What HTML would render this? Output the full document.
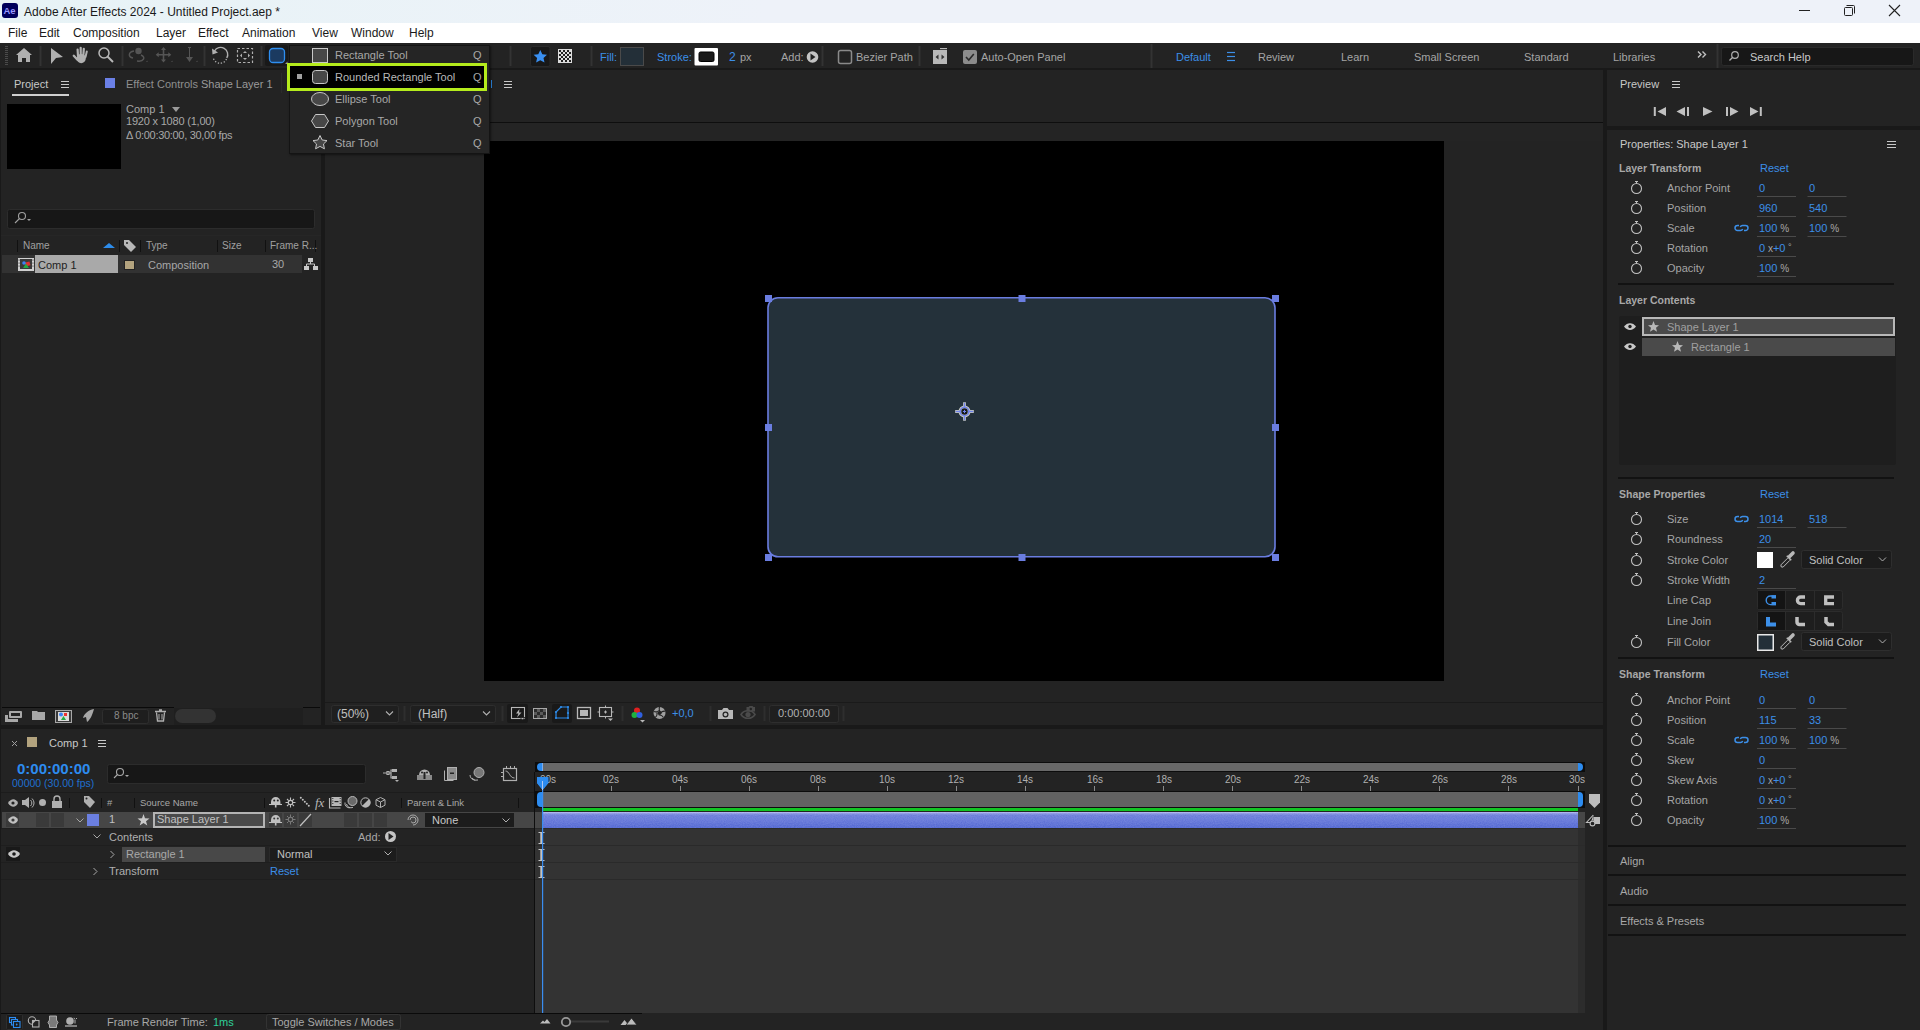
<!DOCTYPE html>
<html><head><meta charset="utf-8">
<style>
*{margin:0;padding:0;box-sizing:border-box}
html,body{width:1920px;height:1030px;overflow:hidden;background:#191919;font-family:"Liberation Sans",sans-serif;}
.a{position:absolute}
.t{position:absolute;white-space:nowrap;font-size:11px;line-height:11px;color:#a5a5a5}
.bl{color:#3c8fe8}
.pn{position:absolute;background:#232323}
svg{position:absolute;overflow:visible}
</style></head><body>
<!-- title bar -->
<div class="a" style="left:0;top:0;width:1920px;height:23px;background:linear-gradient(90deg,#e7f3f6,#eef2f9 40%,#eef2f9)"></div>
<div class="a" style="left:2px;top:3px;width:16px;height:15px;background:#00005b;border-radius:3px"></div>
<div class="t" style="left:3.5px;top:6px;font-size:9.5px;line-height:9.5px;color:#9999ff;font-weight:bold">Ae</div>
<div class="t" style="left:24px;top:6px;font-size:12px;line-height:12px;color:#1a1a1a">Adobe After Effects 2024 - Untitled Project.aep *</div>
<!-- menu bar -->
<div class="a" style="left:0;top:23px;width:1920px;height:20px;background:#fff"></div>
<div class="t" style="top:27px;font-size:12px;line-height:12px;color:#1a1a1a;left:8px">File</div>
<div class="t" style="top:27px;font-size:12px;line-height:12px;color:#1a1a1a;left:39px">Edit</div>
<div class="t" style="top:27px;font-size:12px;line-height:12px;color:#1a1a1a;left:73px">Composition</div>
<div class="t" style="top:27px;font-size:12px;line-height:12px;color:#1a1a1a;left:156px">Layer</div>
<div class="t" style="top:27px;font-size:12px;line-height:12px;color:#1a1a1a;left:198px">Effect</div>
<div class="t" style="top:27px;font-size:12px;line-height:12px;color:#1a1a1a;left:242px">Animation</div>
<div class="t" style="top:27px;font-size:12px;line-height:12px;color:#1a1a1a;left:312px">View</div>
<div class="t" style="top:27px;font-size:12px;line-height:12px;color:#1a1a1a;left:351px">Window</div>
<div class="t" style="top:27px;font-size:12px;line-height:12px;color:#1a1a1a;left:409px">Help</div>

<!-- toolbar -->
<div class="a" style="left:0;top:43px;width:1920px;height:25px;background:#232323"></div>


<!-- window controls -->
<svg style="left:0;top:0" width="1920" height="23">
<line x1="1799" y1="10.5" x2="1810" y2="10.5" stroke="#222" stroke-width="1"/>
<rect x="1844.5" y="7.5" width="8" height="8" fill="none" stroke="#222" stroke-width="1" rx="1"/>
<path d="M1846.5 5.5 H1853.5 a1 1 0 0 1 1 1 V13.5" fill="none" stroke="#222" stroke-width="1"/>
<path d="M1889 5 L1900 16 M1900 5 L1889 16" stroke="#222" stroke-width="1.1"/>
</svg>
<!-- toolbar icons -->
<svg style="left:0;top:43px" width="1920" height="25">
<g fill="#4a4a4a"><rect x="5" y="3" width="3" height="1"/><rect x="5" y="5" width="3" height="1"/><rect x="5" y="7" width="3" height="1"/><rect x="5" y="9" width="3" height="1"/><rect x="5" y="11" width="3" height="1"/><rect x="5" y="13" width="3" height="1"/><rect x="5" y="15" width="3" height="1"/><rect x="5" y="17" width="3" height="1"/><rect x="5" y="19" width="3" height="1"/><rect x="5" y="21" width="3" height="1"/></g>
<g stroke="#333" stroke-width="2"><line x1="40.5" y1="3" x2="40.5" y2="23"/><line x1="122.5" y1="3" x2="122.5" y2="23"/><line x1="204.5" y1="3" x2="204.5" y2="23"/><line x1="261.5" y1="3" x2="261.5" y2="23"/><line x1="510.5" y1="3" x2="510.5" y2="23"/><line x1="591.5" y1="3" x2="591.5" y2="23"/><line x1="822.5" y1="3" x2="822.5" y2="23"/><line x1="919.5" y1="3" x2="919.5" y2="23"/><line x1="1151.5" y1="1" x2="1151.5" y2="25"/><line x1="1717.5" y1="1" x2="1717.5" y2="25"/></g>
<!-- home -->
<path d="M24 5 L32 12 L30 12 L30 19 L26 19 L26 15 L22 15 L22 19 L18 19 L18 12 L16 12 Z" fill="#b0b0b0"/>
<!-- arrow -->
<path d="M51 5 L63 14 L56 15 L51 21 Z" fill="#b0b0b0"/>
<!-- hand -->
<g stroke="#b0b0b0" stroke-linecap="round" fill="none"><path d="M77.6 6.5 L78 13" stroke-width="2.2"/><path d="M80.7 4.8 L80.7 13" stroke-width="2.2"/><path d="M83.8 5.8 L83.3 13" stroke-width="2.2"/><path d="M86.8 8.5 L85.5 14" stroke-width="2"/><path d="M73.8 12.8 L77.5 16.8" stroke-width="2.4"/></g>
<ellipse cx="81.2" cy="15.6" rx="4.6" ry="4.6" fill="#b0b0b0"/><path d="M77 14 L85.5 13 L84.5 18 L78 18z" fill="#b0b0b0"/>
<!-- zoom -->
<circle cx="104" cy="10" r="5" fill="none" stroke="#b8b8b8" stroke-width="1.5"/>
<line x1="107.5" y1="13.5" x2="113" y2="19" stroke="#b8b8b8" stroke-width="2"/>
<!-- roto dim -->
<g fill="none" stroke="#555" stroke-width="1.5"><path d="M134 8 C128 9 128 14 133 15"/><path d="M141 12 C146 14 144 19 137 18"/></g><circle cx="138.5" cy="8" r="3.2" fill="#555"/><path d="M146 19 l1.5 -1.5 v1.5z" fill="#555"/>
<!-- puppet dim -->
<path d="M163.5 4 l2.5 3 h-1.7 v4 h4 v-1.7 l3 2.5 -3 2.5 v-1.7 h-4 v4 h1.7 l-2.5 3 -2.5 -3 h1.7 v-4 h-4 v1.7 l-3 -2.5 3 -2.5 v1.7 h4 v-4 h-1.7z" fill="#555"/>
<path d="M171 19 l1.5 -1.5 v1.5z" fill="#555"/>
<!-- pin dim -->
<path d="M188 4 h3 v1 h-1 v9 h3 l-3.5 5 -3.5 -5 h3 v-9 h-1z" fill="#555"/>
<path d="M196 19 l1.5 -1.5 v1.5z" fill="#555"/>
<!-- rotate -->
<path d="M214.5 8 A7 7 0 0 1 226.8 15" fill="none" stroke="#b0b0b0" stroke-width="1.4"/>
<path d="M226.5 16 A7 7 0 0 1 213.2 14.5" fill="none" stroke="#b0b0b0" stroke-width="1.3" stroke-dasharray="1.3 1.7"/>
<path d="M212 5.5 L212.5 11.5 L218 9.5 Z" fill="#b0b0b0"/>
<!-- crop -->
<rect x="237.5" y="5.5" width="15" height="14" fill="none" stroke="#b0b0b0" stroke-width="1.2" stroke-dasharray="2.5 2"/>
<path d="M245 8 l2 2 h-4z M245 17 l2 -2 h-4z M240 12.5 l2 -2 v4z M250 12.5 l-2 -2 v4z" fill="#b0b0b0"/>
<!-- shape btn -->
<rect x="265" y="2" width="23" height="21" rx="2" fill="#191919"/>
<rect x="269.5" y="5.5" width="15" height="14" rx="3.5" fill="#1b3a60" stroke="#2e8ef0" stroke-width="1.3"/>
<path d="M285 21 l2.5 -2.5 v2.5z" fill="#999"/>
<!-- star btn -->
<rect x="530.5" y="3.5" width="19.5" height="20" rx="2" fill="#181818" stroke="#2a2a2a"/>
<path d="M540.3 7 L542.3 11.3 L547 11.8 L543.5 15 L544.5 19.6 L540.3 17.3 L536.1 19.6 L537.1 15 L533.6 11.8 L538.3 11.3 Z" fill="#3a8ff0"/>
<!-- checker -->
<rect x="558" y="6" width="14" height="14" fill="#ddd"/>
<g fill="#222"><rect x="559" y="7" width="2" height="2"/><rect x="563" y="7" width="2" height="2"/><rect x="567" y="7" width="2" height="2"/><rect x="561" y="9" width="2" height="2"/><rect x="565" y="9" width="2" height="2"/><rect x="569" y="9" width="2" height="2"/><rect x="559" y="11" width="2" height="2"/><rect x="563" y="11" width="2" height="2"/><rect x="567" y="11" width="2" height="2"/><rect x="561" y="13" width="2" height="2"/><rect x="565" y="13" width="2" height="2"/><rect x="569" y="13" width="2" height="2"/><rect x="559" y="15" width="2" height="2"/><rect x="563" y="15" width="2" height="2"/><rect x="567" y="15" width="2" height="2"/><rect x="561" y="17" width="2" height="2"/><rect x="565" y="17" width="2" height="2"/><rect x="569" y="17" width="2" height="2"/></g>
<!-- fill swatch -->
<rect x="620.5" y="4.5" width="23" height="18" fill="#232f38" stroke="#4a4a4a"/>
<!-- stroke swatch -->
<rect x="694.5" y="5" width="23.5" height="17.5" rx="1" fill="#fff"/>
<rect x="699" y="9" width="15" height="9.5" rx="1.5" fill="#1a1a1a" stroke="#000"/>
<!-- add circle -->
<circle cx="812.5" cy="14" r="5.8" fill="#c4c4c4"/>
<path d="M810.5 10.5 L815.5 14 L810.5 17.5 Z" fill="#232323"/>
<!-- checkbox -->
<rect x="838.5" y="7.5" width="13" height="13" rx="2" fill="none" stroke="#8a8a8a" stroke-width="1.5"/>
<!-- panel icon -->
<rect x="933" y="7" width="14" height="14" fill="#b8b8b8"/>
<rect x="940" y="5" width="7" height="1.2" fill="#b8b8b8"/>
<path d="M935.5 14 l3 -2.5 v5z M944.5 14 l-3 -2.5 v5z" fill="#333"/>
<!-- checked -->
<rect x="963" y="7" width="14" height="14" rx="2" fill="#8c8c8c"/>
<path d="M966 14 l2.8 3 l5 -6" fill="none" stroke="#2a2a2a" stroke-width="1.6"/>
<!-- workspace menu -->
<g stroke="#3c8fe8" stroke-width="1.2"><line x1="1227" y1="9.5" x2="1235" y2="9.5"/><line x1="1227" y1="13.5" x2="1235" y2="13.5"/><line x1="1227" y1="17.5" x2="1235" y2="17.5"/></g>
<path d="M1698 8.5 l3 3 -3 3 M1702.5 8.5 l3 3 -3 3" fill="none" stroke="#c0c0c0" stroke-width="1.4"/>
<!-- search -->
<rect x="1721.5" y="4.5" width="192" height="18" rx="2" fill="#171717" stroke="#2a2a2a"/>
<circle cx="1735" cy="12" r="3.3" fill="none" stroke="#b0b0b0" stroke-width="1.2"/>
<line x1="1732.7" y1="14.3" x2="1729.5" y2="17.5" stroke="#b0b0b0" stroke-width="1.3"/>
</svg>
<div class="t" style="left:600px;top:52px;color:#3c8fe8">Fill:</div>
<div class="t" style="left:657px;top:52px;color:#3c8fe8">Stroke:</div>
<div class="t" style="left:729px;top:51px;color:#3c8fe8;font-size:12px;line-height:12px">2</div>
<div class="t" style="left:740px;top:52px">px</div>
<div class="t" style="left:781px;top:52px">Add:</div>
<div class="t" style="left:856px;top:52px">Bezier Path</div>
<div class="t" style="left:981px;top:52px">Auto-Open Panel</div>
<div class="t" style="left:1176px;top:52px;color:#3c8fe8">Default</div>
<div class="t" style="left:1258px;top:52px">Review</div>
<div class="t" style="left:1341px;top:52px">Learn</div>
<div class="t" style="left:1414px;top:52px">Small Screen</div>
<div class="t" style="left:1524px;top:52px">Standard</div>
<div class="t" style="left:1613px;top:52px">Libraries</div>
<div class="t" style="left:1750px;top:52px;color:#c8c8c8">Search Help</div>

<!-- panels -->
<div class="pn" style="left:1px;top:70px;width:320px;height:655px"></div>
<div class="pn" style="left:325px;top:70px;width:1278px;height:655px"></div>
<div class="pn" style="left:1607px;top:70px;width:313px;height:56px"></div>
<div class="pn" style="left:1607px;top:130px;width:313px;height:900px"></div>
<div class="pn" style="left:1px;top:729px;width:1602px;height:301px"></div>


<!-- ===== Project panel ===== -->
<div class="t" style="left:14px;top:79px;color:#c8c8c8">Project</div>
<svg style="left:0;top:0" width="330" height="730">
<g stroke="#c8c8c8" stroke-width="1"><line x1="61" y1="81.5" x2="69" y2="81.5"/><line x1="61" y1="84.5" x2="69" y2="84.5"/><line x1="61" y1="87.5" x2="69" y2="87.5"/></g>
<rect x="12" y="94" width="57" height="2" fill="#d0d0d0"/>
<rect x="105" y="78" width="10" height="10" fill="#6b80e6"/><line x1="281.5" y1="73" x2="281.5" y2="93" stroke="#2c2c2c"/>
<rect x="7" y="104" width="114" height="65" fill="#000"/>
<path d="M172 107 h8 l-4 5z" fill="#9a9a9a"/>
<rect x="7.5" y="209.5" width="307" height="19" rx="2" fill="#171717" stroke="#2c2c2c"/>
<circle cx="22" cy="216" r="3.5" fill="none" stroke="#a0a0a0" stroke-width="1.1"/>
<line x1="19.5" y1="218.5" x2="15" y2="223" stroke="#a0a0a0" stroke-width="1.1"/>
<path d="M27 219 h4 l-2 2z" fill="#a0a0a0"/>
<line x1="1" y1="235.5" x2="321" y2="235.5" stroke="#262626"/>
<g stroke="#111"><line x1="17.5" y1="240" x2="17.5" y2="252"/><line x1="119.5" y1="240" x2="119.5" y2="252"/><line x1="140.5" y1="240" x2="140.5" y2="252"/><line x1="217.5" y1="240" x2="217.5" y2="252"/><line x1="265.5" y1="240" x2="265.5" y2="252"/><line x1="315.5" y1="240" x2="315.5" y2="252"/></g>
<path d="M103 248 L109 243 L115 248 Z" fill="#2d8ceb"/>
<path d="M124 240 h5 l7 7 -5 5 -7 -7z" fill="#b8b8b8"/><circle cx="127" cy="243" r="1" fill="#232323"/>
<rect x="2" y="255" width="300" height="18" fill="#323232"/>
<rect x="35" y="255" width="83" height="18" fill="#a9a9a9"/>
<rect x="18" y="258" width="16" height="13" fill="#d0d0d0"/><rect x="20" y="259" width="12" height="11" fill="#3a3a3a"/>
<g fill="#3a3a3a"><rect x="18.6" y="259.5" width="0.9" height="1.2"/><rect x="18.6" y="262.5" width="0.9" height="1.2"/><rect x="18.6" y="265.5" width="0.9" height="1.2"/><rect x="32.5" y="259.5" width="0.9" height="1.2"/><rect x="32.5" y="262.5" width="0.9" height="1.2"/><rect x="32.5" y="265.5" width="0.9" height="1.2"/></g>
<rect x="20" y="269" width="12" height="1" fill="#d0d0d0"/>
<rect x="25" y="262" width="5" height="4" fill="#e23030" transform="rotate(-15 27.5 264)"/><circle cx="24" cy="263" r="1.8" fill="#3b82f6"/><path d="M23 268 l3 -4.5 3 4.5z" fill="#22aa44"/>
<rect x="124.5" y="260.5" width="10" height="9" fill="#b3a37e" stroke="#222"/>
<g fill="#c8c8c8"><rect x="308" y="258" width="5" height="4"/><rect x="304" y="266" width="5" height="4"/><rect x="313" y="266" width="5" height="4"/><path d="M310.5 262 v2 M306.5 264 h8 v2 M306.5 264 v2" stroke="#c8c8c8" fill="none"/></g>
<!-- bottom bar -->
<line x1="2" y1="707.5" x2="174" y2="707.5" stroke="#0a0a0a"/>
<line x1="303" y1="707.5" x2="320" y2="707.5" stroke="#0a0a0a"/>
<rect x="174" y="708" width="129" height="17" fill="#1f1f1f"/>
<rect x="175" y="709" width="41" height="14" rx="7" fill="#333"/>
<g fill="#a8a8a8"><rect x="9" y="711" width="13" height="7" rx="1"/><rect x="5" y="715" width="3" height="7"/><rect x="7" y="719" width="11" height="3"/></g>
<rect x="11" y="713" width="9" height="3" fill="#232323"/>
<path d="M32 711 h5 l1 1 h7 v8 h-13z" fill="#a8a8a8"/>
<rect x="55.5" y="710.5" width="16" height="12" fill="#3a3a3a" stroke="#a8a8a8"/>
<rect x="58" y="712" width="11" height="9" fill="#dcdcdc"/><circle cx="61" cy="714.5" r="2" fill="#3b82f6"/><path d="M61 720 l2.5 -4 2.5 4z" fill="#22aa44"/><rect x="64" y="713" width="3" height="3" fill="#e33"/>
<path d="M94 709 C88 710 84 714 83 718 L86 717 L87 722 C90 720 92 716 94 709 Z" fill="#a8a8a8"/>
<rect x="102.5" y="709.5" width="46" height="14" rx="2" fill="#1e1e1e" stroke="#2e2e2e"/>
<path d="M155 711.5 h11 M159 710 h3 M156.5 712.5 l1 8.5 h6 l1 -8.5" fill="none" stroke="#b0b0b0" stroke-width="1.3"/>
<path d="M159 714 v5.5 M162 714 v5.5" stroke="#b0b0b0" stroke-width="1"/>
</svg>
<div class="t" style="left:126px;top:150px;display:none"></div>
<div class="t" style="left:126px;top:104px;color:#a8a8a8">Comp 1</div>
<div class="t" style="left:126px;top:116px;color:#a8a8a8;letter-spacing:-0.2px">1920 x 1080 (1,00)</div>
<div class="t" style="left:126px;top:130px;color:#a8a8a8;letter-spacing:-0.3px">&#916; 0:00:30:00, 30,00 fps</div>
<div class="t" style="left:23px;top:241px;color:#a0a0a0;font-size:10px;line-height:10px">Name</div>
<div class="t" style="left:146px;top:241px;color:#a0a0a0;font-size:10px;line-height:10px">Type</div>
<div class="t" style="left:222px;top:241px;color:#a0a0a0;font-size:10px;line-height:10px">Size</div>
<div class="t" style="left:270px;top:241px;color:#a0a0a0;font-size:10px;line-height:10px">Frame R...</div>
<div class="t" style="left:38px;top:260px;color:#1e1e1e">Comp 1</div>
<div class="t" style="left:148px;top:260px;color:#a8a8a8">Composition</div>
<div class="t" style="left:272px;top:259px;color:#a8a8a8">30</div>
<div class="t" style="left:114px;top:711px;color:#8a8a8a;font-size:10px;line-height:10px">8 bpc</div>


<div class="t" style="left:126px;top:79px;color:#8f8f8f">Effect Controls <span style="color:#9a9a9a">Shape Layer 1</span></div>
<!-- ===== Comp panel ===== -->
<svg style="left:0;top:0" width="1610" height="730">
<line x1="282" y1="98" x2="282" y2="98" />
<line x1="325" y1="122.5" x2="1603" y2="122.5" stroke="#0e0e0e"/>
<rect x="325" y="123" width="1278" height="18" fill="#242424"/>
<g stroke="#c8c8c8" stroke-width="1"><line x1="504" y1="81.5" x2="512" y2="81.5"/><line x1="504" y1="84.5" x2="512" y2="84.5"/><line x1="504" y1="87.5" x2="512" y2="87.5"/></g>
<line x1="491.5" y1="80" x2="491.5" y2="88" stroke="#2d8ceb"/>
<rect x="484" y="141" width="960" height="540" fill="#000"/>
<rect x="768" y="297.8" width="507" height="259" rx="10" fill="#24313a" stroke="#6a7de0" stroke-width="1.6"/>
<g fill="#6a7de0">
<rect x="765" y="295" width="7" height="7"/><rect x="1018.5" y="295" width="7" height="7"/><rect x="1272" y="295" width="7" height="7"/>
<rect x="765" y="424" width="7" height="7"/><rect x="1272" y="424" width="7" height="7"/>
<rect x="765" y="554" width="7" height="7"/><rect x="1018.5" y="554" width="7" height="7"/><rect x="1272" y="554" width="7" height="7"/>
</g>
<g transform="translate(964.5 411.5)">
<g stroke="#dcdccc" fill="none" opacity="0.9"><circle r="4.3" stroke-width="3.4"/><path d="M0 -9.3 V-4 M0 9.3 V4 M-9.3 0 H-4 M9.3 0 H4" stroke-width="2.8"/></g>
<g stroke="#6f83ea" fill="none"><circle r="4.3" stroke-width="1.6"/><path d="M0 -8.8 V-4 M0 8.8 V4 M-8.8 0 H-4 M8.8 0 H4" stroke-width="1.4"/></g>
<circle r="3.2" fill="#15191d"/>
<path d="M0 -1.6 V1.6 M-1.6 0 H1.6" stroke="#6f83ea" stroke-width="1"/>
</g>
<!-- viewer bottom bar -->
<line x1="325" y1="702.5" x2="1603" y2="702.5" stroke="#1a1a1a"/>
<rect x="331.5" y="705.5" width="67" height="17" rx="2" fill="#1f1f1f" stroke="#2e2e2e"/>
<path d="M386 711.5 l3.5 3.5 3.5 -3.5" fill="none" stroke="#b0b0b0" stroke-width="1.1"/>
<line x1="404.5" y1="706" x2="404.5" y2="721" stroke="#2e2e2e" stroke-width="2"/>
<rect x="410.5" y="705.5" width="85" height="17" rx="2" fill="#1f1f1f" stroke="#2e2e2e"/>
<path d="M483 711.5 l3.5 3.5 3.5 -3.5" fill="none" stroke="#b0b0b0" stroke-width="1.1"/>
<line x1="502.5" y1="706" x2="502.5" y2="721" stroke="#2e2e2e" stroke-width="2"/>
<rect x="507" y="704" width="21" height="19" rx="2" fill="#191919"/>
<rect x="511.5" y="707.5" width="13" height="11" fill="none" stroke="#b8b8b8" stroke-width="1.1"/>
<path d="M519.5 709 l-3.5 4.5 h2.5 l-1.5 4 4.5 -5 h-2.5z" fill="#b8b8b8"/><path d="M520 717.5 h5 l-2.5 2.5z" fill="#b8b8b8" stroke="#191919" stroke-width="0.8"/>
<rect x="533.5" y="708.5" width="13" height="10" fill="#5a5a5a" stroke="#a8a8a8"/>
<g fill="#2a2a2a"><rect x="534" y="709" width="3" height="3"/><rect x="540" y="709" width="3" height="3"/><rect x="537" y="712" width="3" height="3"/><rect x="543" y="712" width="3" height="3"/><rect x="534" y="715" width="3" height="3"/><rect x="540" y="715" width="3" height="3"/></g>
<rect x="552" y="704" width="20" height="19" rx="2" fill="#191919"/>
<path d="M556 712 L561 707 L568 707 L568 718 L556 718 Z" fill="none" stroke="#2d8ceb" stroke-width="1.2"/>
<g fill="#2d8ceb"><circle cx="556" cy="712" r="1.1"/><circle cx="561" cy="707" r="1.1"/><circle cx="568" cy="707" r="1.1"/><circle cx="568" cy="713" r="1.1"/><circle cx="568" cy="718" r="1.1"/><circle cx="556" cy="718" r="1.1"/></g>
<rect x="577.5" y="707.5" width="13" height="11" fill="none" stroke="#b8b8b8" stroke-width="1.3"/><rect x="580" y="710" width="8" height="6" fill="#b8b8b8"/>
<rect x="599.5" y="707.5" width="12" height="9" fill="none" stroke="#b8b8b8" stroke-width="1.1"/>
<path d="M605.5 705.5 v2.5 M605.5 716 v2.5 M597.5 712 h2.5 M611 712 h2.5 M604 712 h3 M605.5 710.5 v3" stroke="#b8b8b8" stroke-width="1"/>
<path d="M608 718.5 h5 l-2.5 2.5z" fill="#b8b8b8"/>
<line x1="622.5" y1="706" x2="622.5" y2="721" stroke="#2e2e2e" stroke-width="2"/>
<circle cx="637" cy="710.5" r="3" fill="#e02020"/><circle cx="634.5" cy="715" r="3" fill="#20b040"/><circle cx="639.5" cy="715" r="3" fill="#3060e0"/>
<path d="M640 720 h5 l-2.5 2.5z" fill="#b8b8b8"/>
<circle cx="659.5" cy="713" r="6" fill="#a0a0a0"/>
<path d="M659.5 707 q-1 3.5 1.5 5.5 M665.2 711.2 q-3.5 -0.5 -4.8 2.6 M663.5 717.5 q-1.8 -3 -4.8 -2.5 M655 717.5 q2.8 -2 1.8 -5 M653.8 711.5 q3 1.2 5 -1" fill="none" stroke="#232323" stroke-width="1.1"/>
<circle cx="659.5" cy="713" r="2" fill="#232323"/>
<line x1="710.5" y1="706" x2="710.5" y2="721" stroke="#2e2e2e" stroke-width="2"/>
<path d="M718 710 h4 l1.5 -2 h4 l1.5 2 h4 v9 h-15z" fill="#b8b8b8"/><circle cx="725.5" cy="714.5" r="3" fill="#232323"/><circle cx="725.5" cy="714.5" r="1.7" fill="#b8b8b8"/>
<path d="M741 714.5 c3 -5 11 -5 14 0 c-3 5 -11 5 -14 0z" fill="none" stroke="#4a4a4a" stroke-width="1.6"/><circle cx="748" cy="714.5" r="2.6" fill="#4a4a4a"/><path d="M746.5 707 h2 l1 -1 h3 l1 1 h1.5 v4.5 h-8.5z" fill="#4a4a4a"/><circle cx="750.8" cy="709" r="1.2" fill="#232323"/>
<line x1="764.5" y1="706" x2="764.5" y2="721" stroke="#2e2e2e" stroke-width="2"/>
<rect x="769.5" y="705.5" width="69" height="17" rx="2" fill="#1f1f1f" stroke="#2e2e2e"/>
<line x1="843.5" y1="706" x2="843.5" y2="721" stroke="#2e2e2e" stroke-width="2"/>
</svg>
<div class="t" style="left:337px;top:708px;color:#c0c0c0;font-size:12px;line-height:12px">(50%)</div>
<div class="t" style="left:418px;top:708px;color:#c0c0c0;font-size:12px;line-height:12px">(Half)</div>
<div class="t" style="left:672px;top:708px;color:#3c8fe8">+0,0</div>
<div class="t" style="left:778px;top:708px;color:#b0b0b0">0:00:00:00</div>

<!-- ===== Dropdown ===== -->
<div class="a" style="left:289px;top:45px;width:201px;height:109px;background:#252525;border:1px solid #141414;box-shadow:1px 1px 2px rgba(0,0,0,.5)"></div>
<div class="a" style="left:287px;top:63px;width:200px;height:28px;background:#000;border:3px solid #b5ec1c"></div>
<svg style="left:0;top:0" width="500" height="160">
<rect x="312.5" y="48.5" width="15" height="14" fill="#474747" stroke="#c8c8c8"/>
<rect x="312.5" y="70.5" width="15" height="13" rx="3" fill="#474747" stroke="#c8c8c8"/>
<rect x="297" y="74" width="5" height="5" fill="#a0a0a0"/>
<ellipse cx="320" cy="99" rx="8.5" ry="6.5" fill="#474747" stroke="#c8c8c8"/>
<path d="M315.5 114.5 h9 l4 6.5 -4 6.5 h-9 l-4 -6.5z" fill="#474747" stroke="#c8c8c8"/>
<path d="M320 135.5 L322.2 140 L327 140.6 L323.5 144 L324.4 148.8 L320 146.4 L315.6 148.8 L316.5 144 L313 140.6 L317.8 140 Z" fill="#474747" stroke="#c8c8c8"/>
</svg>
<div class="t" style="left:335px;top:50px;color:#a8a8a8">Rectangle Tool</div>
<div class="t" style="left:335px;top:72px;color:#b8b8b8">Rounded Rectangle Tool</div>
<div class="t" style="left:335px;top:94px;color:#a8a8a8">Ellipse Tool</div>
<div class="t" style="left:335px;top:116px;color:#a8a8a8">Polygon Tool</div>
<div class="t" style="left:335px;top:138px;color:#a8a8a8">Star Tool</div>
<div class="t" style="left:473px;top:50px;color:#a8a8a8">Q</div>
<div class="t" style="left:473px;top:72px;color:#a8a8a8">Q</div>
<div class="t" style="left:473px;top:94px;color:#a8a8a8">Q</div>
<div class="t" style="left:473px;top:116px;color:#a8a8a8">Q</div>
<div class="t" style="left:473px;top:138px;color:#a8a8a8">Q</div>


<!-- ===== Timeline ===== -->
<svg style="left:0;top:0" width="1610" height="1030">
<path d="M12 741 l5 5 M17 741 l-5 5" stroke="#a0a0a0" stroke-width="1"/>
<rect x="27" y="737" width="10" height="10" fill="#b3a37e"/>
<g stroke="#c8c8c8" stroke-width="1"><line x1="98" y1="740.5" x2="106" y2="740.5"/><line x1="98" y1="743.5" x2="106" y2="743.5"/><line x1="98" y1="746.5" x2="106" y2="746.5"/></g>
<rect x="107.5" y="764.5" width="258" height="19" rx="2" fill="#171717" stroke="#2c2c2c"/>
<circle cx="120" cy="772" r="3.5" fill="none" stroke="#a8a8a8" stroke-width="1.1"/>
<line x1="117.5" y1="774.5" x2="114" y2="778" stroke="#a8a8a8" stroke-width="1.1"/>
<path d="M125 775 h4 l-2 2z" fill="#a8a8a8"/>
<!-- header icons -->
<g fill="#b0b0b0" stroke="#b0b0b0">
<path d="M383 773 h4 M387 771.5 h2 v3 h-2z M389 773 h2 v-3 h3 v2 M391 773 v5 h3" fill="none" stroke-width="1.2"/>
<rect x="392" y="769" width="5" height="3" stroke="none"/><rect x="392" y="776" width="5" height="3" stroke="none"/>
<path d="M395 780 h4 l-2 2z" stroke="none"/>
<path d="M417 775 h15 v5 h-15z" stroke="none" fill="#8a8a8a"/>
<path d="M419 775 a5.5 5.5 0 0 1 11 0" stroke="none"/>
<rect x="423.5" y="772" width="2" height="7" stroke="none" fill="#232323"/><circle cx="422" cy="772.5" r="1" stroke="none" fill="#232323"/><circle cx="427" cy="772.5" r="1" stroke="none" fill="#232323"/>
<rect x="447.5" y="767.5" width="9" height="12" fill="#8a8a8a" stroke="#b0b0b0"/>
<path d="M444.5 770.5 v10 h9" fill="none" stroke-width="1"/>
<rect x="450" y="772.5" width="4" height="1.5" stroke="none" fill="#232323"/>
<circle cx="479" cy="772.5" r="5" fill="#777" stroke="#b0b0b0" stroke-width="1"/>
<path d="M472 778 a5 5 0 0 0 6 2 M470 775 a5 5 0 0 0 5 5" fill="none" stroke-width="1"/>
<rect x="503.5" y="768.5" width="13" height="12" fill="none" stroke-width="1.2"/><path d="M506.5 766 v2 M510.5 766 v2 M514.5 766 v2 M501 772.5 h2 M501 776.5 h2" fill="none" stroke-width="1"/>
<path d="M505.5 771 c4 0 4 7 9 7" fill="none" stroke-width="1"/>
</g>
<line x1="1" y1="792.5" x2="534" y2="792.5" stroke="#1c1c1c"/>
<!-- column header -->
<g fill="#b0b0b0">
<path d="M8 803 c3 -5 8 -5 10 0 c-2 5 -7 5 -10 0z"/><circle cx="13" cy="803" r="1.6" fill="#232323"/>
<path d="M22 800 h3 l4 -3 v11 l-4 -3 h-3z"/>
<path d="M30.5 800 a4 4 0 0 1 0 6 M32 798.5 a6 6 0 0 1 0 9" fill="none" stroke="#b0b0b0" stroke-width="1"/>
<circle cx="42.5" cy="802.5" r="3.5"/>
<rect x="52" y="801" width="10" height="7"/><path d="M54 801 v-2 a3 3 0 0 1 6 0 v2" fill="none" stroke="#b0b0b0" stroke-width="1.4"/>
<path d="M84 796 h5 l6 6 -5 6 -6 -6z"/><circle cx="86.5" cy="798.5" r="1" fill="#232323"/>
<path d="M271 804 v-2 a4.7 5 0 0 1 9.4 0 v2z" fill="#c0c0c0" stroke="none"/><path d="M269 804.5 h13" stroke="#c0c0c0" stroke-width="1.1"/><rect x="274.9" y="803" width="1.6" height="4.5" fill="#c0c0c0" stroke="none"/><circle cx="274.2" cy="800.6" r="1" fill="#232323" stroke="none"/><circle cx="277.8" cy="800.6" r="1" fill="#232323" stroke="none"/>
<circle cx="290.5" cy="802.5" r="2.2" fill="none" stroke="#c0c0c0" stroke-width="1.2"/><path d="M290.5 797.5 v2.5 M290.5 805 v2.5 M285.5 802.5 h2.5 M293 802.5 h2.5 M287 799 l1.7 1.7 M292.3 804.3 l1.7 1.7 M294 799 l-1.7 1.7 M288.7 804.3 l-1.7 1.7" stroke="#c0c0c0" stroke-width="1.1" fill="none"/>
<g fill="#c0c0c0" stroke="none"><circle cx="300.8" cy="797.8" r="1"/><circle cx="302.8" cy="799.8" r="1"/><circle cx="304.8" cy="801.8" r="1"/><circle cx="306.8" cy="803.8" r="1"/><circle cx="308.8" cy="805.8" r="1"/></g>
<text x="315" y="807" font-family="Liberation Serif" font-style="italic" font-size="13" fill="#b8b8b8" stroke="none">fx</text>
<path d="M329.5 798 v10 h11" fill="none" stroke="#b8b8b8" stroke-width="1.1"/><rect x="331.5" y="797" width="10" height="9" fill="#b8b8b8" stroke="none"/><rect x="334.5" y="801" width="4" height="1.2" fill="#232323" stroke="none"/><g fill="#232323" stroke="none"><rect x="332.3" y="798" width="1" height="1"/><rect x="332.3" y="800.5" width="1" height="1"/><rect x="332.3" y="803" width="1" height="1"/><rect x="339.7" y="798" width="1" height="1"/><rect x="339.7" y="800.5" width="1" height="1"/><rect x="339.7" y="803" width="1" height="1"/></g>
<circle cx="352.5" cy="801" r="4.5" fill="#6a6a6a" stroke="#b8b8b8" stroke-width="1"/><path d="M346.5 804 a4.5 4.5 0 0 0 6.5 3.3 M345 802.5 a4.5 4.5 0 0 0 5 5.3" fill="none" stroke="#b8b8b8" stroke-width="1"/>
<circle cx="365.5" cy="802.5" r="5" fill="#b8b8b8" stroke="none"/><path d="M361.96 806.04 A5 5 0 0 1 369.04 798.96 Z" fill="#232323" stroke="none"/><circle cx="365.5" cy="802.5" r="4.6" fill="none" stroke="#b8b8b8" stroke-width="0.9"/>
<path d="M380.5 797.5 l4.5 2.2 v5.5 l-4.5 2.3 -4.5 -2.3 v-5.5z M376 799.7 l4.5 2.3 4.5 -2.3 M380.5 802 v5.5" fill="none" stroke="#b0b0b0" stroke-width="1"/>
</g>
<g stroke="#111" stroke-width="1"><line x1="69.5" y1="798" x2="69.5" y2="808"/><line x1="101.5" y1="798" x2="101.5" y2="808"/><line x1="134.5" y1="798" x2="134.5" y2="808"/><line x1="264.5" y1="798" x2="264.5" y2="808"/><line x1="401.5" y1="798" x2="401.5" y2="808"/><line x1="518.5" y1="798" x2="518.5" y2="808"/></g>
<!-- layer row -->
<rect x="2" y="812" width="532" height="16" fill="#464646"/>
<rect x="6" y="813" width="13" height="14" fill="#3a3a3a"/>
<rect x="36" y="813" width="13" height="14" fill="#3a3a3a"/><rect x="51" y="813" width="13" height="14" fill="#3a3a3a"/>
<path d="M8 820 c3 -5 8 -5 10 0 c-2 5 -7 5 -10 0z" fill="#c0c0c0"/><circle cx="13" cy="820" r="1.6" fill="#3a3a3a"/>
<path d="M76.5 818.5 l3.5 3.5 3.5 -3.5" fill="none" stroke="#a8a8a8" stroke-width="1"/>
<rect x="87" y="814" width="12" height="12" fill="#6b7fe0"/>
<path d="M143.5 814 L145 818.3 L149.5 818.5 L146 821.2 L147.3 825.5 L143.5 823 L139.7 825.5 L141 821.2 L137.5 818.5 L142 818.3 Z" fill="#c8c8c8"/>
<rect x="154" y="813" width="110" height="14" fill="#4a4a4a" stroke="#b4b4b4" stroke-width="2"/>
<rect x="269" y="813" width="13" height="14" fill="#3a3a3a"/><rect x="284" y="813" width="13" height="14" fill="#3a3a3a"/><rect x="299" y="813" width="13" height="14" fill="#3a3a3a"/>
<rect x="344" y="813" width="13" height="14" fill="#3a3a3a"/><rect x="359" y="813" width="13" height="14" fill="#3a3a3a"/><rect x="374" y="813" width="13" height="14" fill="#3a3a3a"/>
<path d="M271 822 v-2 a4.7 5 0 0 1 9.4 0 v2z" fill="#c0c0c0"/><path d="M269 822.5 h13" stroke="#c0c0c0" stroke-width="1.1"/><rect x="274.9" y="821" width="1.6" height="4.5" fill="#c0c0c0"/><circle cx="274.2" cy="818.6" r="1" fill="#3a3a3a"/><circle cx="277.8" cy="818.6" r="1" fill="#3a3a3a"/>
<circle cx="290.5" cy="819.5" r="2.2" fill="none" stroke="#7a7a7a" stroke-width="1.1"/><path d="M290.5 814.5 v2.5 M290.5 822 v2.5 M285.5 819.5 h2.5 M293 819.5 h2.5 M287 816 l1.7 1.7 M292.3 821.3 l1.7 1.7 M294 816 l-1.7 1.7 M288.7 821.3 l-1.7 1.7" stroke="#7a7a7a" stroke-width="1" fill="none"/>
<line x1="300" y1="826" x2="311" y2="814" stroke="#c0c0c0" stroke-width="1.2"/>
<path d="M413 820 m-5 0 a5 5 0 1 1 5 5 M413 820 m-3 0 a3 3 0 1 1 3 3 a1.5 1.5 0 0 1 -1.5 -1.5" fill="none" stroke="#aaa" stroke-width="1"/>
<rect x="425" y="813" width="89" height="14" fill="#1c1c1c"/>
<path d="M502.5 818.5 l3.5 3.5 3.5 -3.5" fill="none" stroke="#b0b0b0" stroke-width="1"/>
<line x1="1" y1="828.5" x2="534" y2="828.5" stroke="#1e1e1e"/>
<!-- contents -->
<path d="M93.5 834.5 l3.5 3.5 3.5 -3.5" fill="none" stroke="#a8a8a8" stroke-width="1"/>
<circle cx="390.5" cy="836.5" r="5.5" fill="#c4c4c4"/><path d="M388.5 833 l5 3.5 -5 3.5z" fill="#232323"/>
<line x1="1" y1="845.5" x2="534" y2="845.5" stroke="#1e1e1e"/>
<!-- rectangle 1 -->
<rect x="6" y="847" width="14" height="14" fill="#191919"/>
<path d="M8 854 c3 -5 9 -5 12 0 c-3 5 -9 5 -12 0z" fill="#c8c8c8"/><circle cx="14" cy="854" r="1.8" fill="#191919"/>
<path d="M110.5 851 l3.5 3.5 -3.5 3.5" fill="none" stroke="#a8a8a8" stroke-width="1"/>
<rect x="122" y="847" width="143" height="15" fill="#484848"/>
<rect x="269.5" y="847.5" width="127" height="14" fill="#1c1c1c" stroke="#2a2a2a"/>
<path d="M384.5 851.5 l3.5 3.5 3.5 -3.5" fill="none" stroke="#b0b0b0" stroke-width="1"/>
<line x1="1" y1="862.5" x2="534" y2="862.5" stroke="#1e1e1e"/>
<path d="M93.5 868 l3.5 3.5 -3.5 3.5" fill="none" stroke="#a8a8a8" stroke-width="1"/>
<line x1="1" y1="879.5" x2="534" y2="879.5" stroke="#1e1e1e"/>
<!-- divider -->
<rect x="534" y="772" width="1" height="241" fill="#0e0e0e"/>
</svg>
<div class="t" style="left:49px;top:738px;color:#c8c8c8">Comp 1</div>
<div class="t" style="left:17px;top:760.5px;color:#2d8cf0;font-size:15px;line-height:15px;font-weight:bold">0:00:00:00</div>
<div class="t" style="left:12px;top:778px;color:#1f6fd0;font-size:10.5px;line-height:10.5px">00000 (30.00 fps)</div>
<div class="t" style="left:107px;top:798px;color:#a8a8a8;font-size:9.5px;line-height:9.5px">#</div>
<div class="t" style="left:140px;top:798px;color:#a8a8a8;font-size:9.5px;line-height:9.5px">Source Name</div>
<div class="t" style="left:407px;top:798px;color:#a8a8a8;font-size:9.5px;line-height:9.5px">Parent &amp; Link</div>
<div class="t" style="left:109px;top:814px;color:#c0c0c0;font-size:11px">1</div>
<div class="t" style="left:157px;top:814px;color:#c0c0c0">Shape Layer 1</div>
<div class="t" style="left:432px;top:815px;color:#c8c8c8">None</div>
<div class="t" style="left:109px;top:832px;color:#b0b0b0">Contents</div>
<div class="t" style="left:358px;top:832px;color:#a8a8a8">Add:</div>
<div class="t" style="left:126px;top:849px;color:#a8a8a8">Rectangle 1</div>
<div class="t" style="left:277px;top:849px;color:#c0c0c0">Normal</div>
<div class="t" style="left:109px;top:866px;color:#b0b0b0">Transform</div>
<div class="t" style="left:270px;top:866px;color:#3c8fe8">Reset</div>


<!-- ===== time area ===== -->
<svg style="left:0;top:0" width="1610" height="1030">
<rect x="535" y="829" width="1043" height="184" fill="#333333"/>
<rect x="1578" y="829" width="7" height="184" fill="#2c2c2c"/><rect x="1578" y="812" width="7" height="16" fill="#474747"/>
<rect x="535" y="812" width="7" height="16" fill="#474747"/>
<rect x="535" y="762" width="1050" height="10" fill="#0c0c0c"/>
<rect x="542" y="763" width="1036" height="8" fill="#686868"/>
<path d="M542 763 v8 h-1 a4 4 0 0 1 -4 -4 a4 4 0 0 1 4 -4z" fill="#2d8cf0"/>
<path d="M1578 763 v8 h1 a4 4 0 0 0 4 -4 a4 4 0 0 0 -4 -4z" fill="#2d8cf0"/>
<rect x="535" y="772" width="1050" height="19" fill="#232323"/>
<line x1="611.5" y1="786" x2="611.5" y2="791" stroke="#8a8a8a"/><line x1="680.5" y1="786" x2="680.5" y2="791" stroke="#8a8a8a"/><line x1="749.5" y1="786" x2="749.5" y2="791" stroke="#8a8a8a"/><line x1="818.5" y1="786" x2="818.5" y2="791" stroke="#8a8a8a"/><line x1="887.5" y1="786" x2="887.5" y2="791" stroke="#8a8a8a"/><line x1="956.5" y1="786" x2="956.5" y2="791" stroke="#8a8a8a"/><line x1="1025.5" y1="786" x2="1025.5" y2="791" stroke="#8a8a8a"/><line x1="1094.5" y1="786" x2="1094.5" y2="791" stroke="#8a8a8a"/><line x1="1163.5" y1="786" x2="1163.5" y2="791" stroke="#8a8a8a"/><line x1="1232.5" y1="786" x2="1232.5" y2="791" stroke="#8a8a8a"/><line x1="1301.5" y1="786" x2="1301.5" y2="791" stroke="#8a8a8a"/><line x1="1370.5" y1="786" x2="1370.5" y2="791" stroke="#8a8a8a"/><line x1="1439.5" y1="786" x2="1439.5" y2="791" stroke="#8a8a8a"/><line x1="1508.5" y1="786" x2="1508.5" y2="791" stroke="#8a8a8a"/><line x1="1578.5" y1="786" x2="1578.5" y2="791" stroke="#8a8a8a"/>
<rect x="535" y="791" width="1050" height="17" fill="#0c0c0c"/>
<rect x="542" y="792" width="1036" height="15" fill="#626262"/>
<path d="M542 792 v15 h-1 a4 4 0 0 1 -4 -4 v-7 a4 4 0 0 1 4 -4z" fill="#2d8cf0"/>
<path d="M1578 792 v15 h1 a4 4 0 0 0 4 -4 v-7 a4 4 0 0 0 -4 -4z" fill="#2d8cf0"/>
<rect x="542" y="808" width="1036" height="3" fill="#12c424"/>
<defs>
<linearGradient id="lg" x1="0" y1="0" x2="0" y2="1"><stop offset="0" stop-color="#b4bef2"/><stop offset="0.1" stop-color="#8090e0"/><stop offset="0.2" stop-color="#6678d8"/><stop offset="0.6" stop-color="#5b6ed6"/><stop offset="1" stop-color="#4a60d0"/></linearGradient>
</defs>
<filter id="nz" x="0" y="0" width="1" height="1"><feTurbulence type="fractalNoise" baseFrequency="0.9" numOctaves="2" seed="3"/><feColorMatrix values="0 0 0 0 1  0 0 0 0 1  0 0 0 0 1  0 0 0 0.18 0"/><feComposite in2="SourceGraphic" operator="in"/></filter><rect x="543" y="812" width="1035" height="16" fill="url(#lg)"/><rect x="543" y="812" width="1035" height="16" fill="#fff" filter="url(#nz)"/>
<g stroke="#2a2a2a"><line x1="535" y1="828.5" x2="1585" y2="828.5"/><line x1="535" y1="845.5" x2="1585" y2="845.5"/><line x1="535" y1="862.5" x2="1585" y2="862.5"/><line x1="535" y1="879.5" x2="1585" y2="879.5"/></g>
<g stroke="#c4c4c4" fill="none">
<path d="M538.5 832.5 h6 M538.5 843.5 h6" stroke-width="1.2"/><path d="M541.2 833 v10" stroke-width="1.8"/>
<path d="M538.5 849.5 h6 M538.5 860.5 h6" stroke-width="1.2"/><path d="M541.2 850 v10" stroke-width="1.8"/>
<path d="M538.5 866.5 h6 M538.5 877.5 h6" stroke-width="1.2"/><path d="M541.2 867 v10" stroke-width="1.8"/>
</g>
<rect x="542" y="778" width="1" height="235" fill="#3a8df0"/>
<path d="M537 777 h11 v6 l-5.5 7 -5.5 -7z" fill="#2d8cf0"/>
<rect x="542" y="781" width="1" height="9" fill="#a0a0a0"/>
<rect x="542" y="763" width="1" height="8" fill="#7aaef0"/>
<!-- right icons column -->
<path d="M1589 794 h11 v8.5 l-5.5 5.5 -5.5 -5.5z" fill="#bcbcbc"/>
<rect x="1593.5" y="817" width="6.5" height="7" fill="#bcbcbc"/><path d="M1593.3 815 L1586.5 822.5 h5" fill="none" stroke="#bcbcbc" stroke-width="1.1"/><path d="M1593.3 815 v5 l-2 1z" fill="#bcbcbc"/><circle cx="1592.5" cy="823.5" r="2.4" fill="#232323" stroke="#bcbcbc" stroke-width="1.1"/>
<rect x="1" y="1013" width="641" height="1" fill="#0a0a0a"/>
<!-- status bar -->
<rect x="6.5" y="1014.5" width="16" height="15" rx="1" fill="#1c1c1c" stroke="#2e2e2e"/>
<g fill="#1c1c1c" stroke="#2d8cf0" stroke-width="1.1"><rect x="9.5" y="1017.5" width="6" height="5"/><rect x="11.5" y="1019.5" width="6" height="5.5"/><rect x="13.5" y="1021.5" width="6.5" height="6"/></g><circle cx="16.7" cy="1024.5" r="0.9" fill="#2d8cf0"/>
<circle cx="32" cy="1020.5" r="3.7" fill="none" stroke="#b0b0b0" stroke-width="1.1"/><rect x="32.5" y="1020.5" width="6.5" height="6.5" fill="#232323" stroke="#b0b0b0" stroke-width="1.1"/><path d="M33 1021 l2.5 0 l-2.5 2.5z" fill="#b0b0b0"/>
<path d="M49.5 1016 h7 v4 l1.5 2.5 -1.5 2.5 v2.5 h-7 v-2.5 l-1.5 -2.5 1.5 -2.5z" fill="#7a7a7a" stroke="#b8b8b8" stroke-width="0.9"/>
<circle cx="70" cy="1021" r="3.8" fill="#b0b0b0"/><path d="M65 1026 h12" stroke="#b0b0b0" stroke-width="1.3"/><path d="M75 1019.5 v4 M74.5 1019 l-0.5 -1.2 M76 1019 l1 -1" stroke="#b0b0b0" stroke-width="1"/>
<rect x="266.5" y="1014.5" width="134" height="15" rx="2" fill="#232323" stroke="#333"/>
<path d="M540 1023.5 l3 -3 1.5 1.5 2.5 -3 3.5 4.5z" fill="#bcbcbc"/>
<line x1="570" y1="1021.5" x2="609" y2="1021.5" stroke="#3a3a3a" stroke-width="2"/>
<circle cx="566" cy="1022" r="4.2" fill="#232323" stroke="#9a9a9a" stroke-width="1.8"/>
<path d="M620.5 1025 l4 -5 4 5z" fill="#bcbcbc"/><path d="M626 1025 l5.5 -7 5.5 7z" fill="#bcbcbc" stroke="#232323" stroke-width="0.8"/>
</svg>
<div class="t" style="left:540px;top:775px;font-size:10px;line-height:10px;color:#b0b0b0">00s</div>
<div class="t" style="left:603px;top:775px;font-size:10px;line-height:10px;color:#b0b0b0;width:16px;text-align:center">02s</div>
<div class="t" style="left:672px;top:775px;font-size:10px;line-height:10px;color:#b0b0b0;width:16px;text-align:center">04s</div>
<div class="t" style="left:741px;top:775px;font-size:10px;line-height:10px;color:#b0b0b0;width:16px;text-align:center">06s</div>
<div class="t" style="left:810px;top:775px;font-size:10px;line-height:10px;color:#b0b0b0;width:16px;text-align:center">08s</div>
<div class="t" style="left:879px;top:775px;font-size:10px;line-height:10px;color:#b0b0b0;width:16px;text-align:center">10s</div>
<div class="t" style="left:948px;top:775px;font-size:10px;line-height:10px;color:#b0b0b0;width:16px;text-align:center">12s</div>
<div class="t" style="left:1017px;top:775px;font-size:10px;line-height:10px;color:#b0b0b0;width:16px;text-align:center">14s</div>
<div class="t" style="left:1087px;top:775px;font-size:10px;line-height:10px;color:#b0b0b0;width:16px;text-align:center">16s</div>
<div class="t" style="left:1156px;top:775px;font-size:10px;line-height:10px;color:#b0b0b0;width:16px;text-align:center">18s</div>
<div class="t" style="left:1225px;top:775px;font-size:10px;line-height:10px;color:#b0b0b0;width:16px;text-align:center">20s</div>
<div class="t" style="left:1294px;top:775px;font-size:10px;line-height:10px;color:#b0b0b0;width:16px;text-align:center">22s</div>
<div class="t" style="left:1363px;top:775px;font-size:10px;line-height:10px;color:#b0b0b0;width:16px;text-align:center">24s</div>
<div class="t" style="left:1432px;top:775px;font-size:10px;line-height:10px;color:#b0b0b0;width:16px;text-align:center">26s</div>
<div class="t" style="left:1501px;top:775px;font-size:10px;line-height:10px;color:#b0b0b0;width:16px;text-align:center">28s</div>
<div class="t" style="left:1569px;top:775px;font-size:10px;line-height:10px;color:#b0b0b0">30s</div>

<svg style="left:0;top:0" width="600" height="1030"><path d="M537 777 h11.5 v6 l-5.75 7 -5.75 -7z" fill="#2d8cf0"/><rect x="542" y="781" width="1" height="9" fill="#b0c8f0"/><rect x="542" y="790" width="1.2" height="223" fill="#3a8df0"/></svg>
<div class="t" style="left:107px;top:1017px;color:#a8a8a8">Frame Render Time:</div>
<div class="t" style="left:213px;top:1017px;color:#2fd09a">1ms</div>
<div class="t" style="left:272px;top:1017px;color:#a8a8a8">Toggle Switches / Modes</div>


<!-- ===== Right panels ===== -->
<svg style="left:0;top:0" width="1920" height="1030">
<g stroke="#c8c8c8" stroke-width="1"><line x1="1672" y1="81.5" x2="1680" y2="81.5"/><line x1="1672" y1="84.5" x2="1680" y2="84.5"/><line x1="1672" y1="87.5" x2="1680" y2="87.5"/></g>
<g fill="#c0c0c0">
<rect x="1653.8" y="107" width="2" height="9"/><path d="M1666 107 v9 l-8.5 -4.5z"/>
<path d="M1685 107 v9 l-8.5 -4.5z"/><rect x="1687" y="107" width="2" height="9"/>
<path d="M1703 107 v9 l9.5 -4.5z"/>
<rect x="1726" y="107" width="2" height="9"/><path d="M1730 107 v9 l8.5 -4.5z"/>
<path d="M1750 107 v9 l8.5 -4.5z"/><rect x="1759.8" y="107" width="2" height="9"/>
</g>
<g stroke="#c8c8c8" stroke-width="1"><line x1="1887" y1="141.5" x2="1896" y2="141.5"/><line x1="1887" y1="144.5" x2="1896" y2="144.5"/><line x1="1887" y1="147.5" x2="1896" y2="147.5"/></g>
<g fill="none" stroke="#c0c0c0" stroke-width="1.1"><circle cx="1636.5" cy="188.5" r="5"/><path d="M1636.5 183.5 v-2 M1635 181.5 h3"/></g><line x1="1757" y1="196.5" x2="1796" y2="196.5" stroke="#4a4a4a"/><line x1="1807.5" y1="196.5" x2="1846.5" y2="196.5" stroke="#4a4a4a"/><g fill="none" stroke="#c0c0c0" stroke-width="1.1"><circle cx="1636.5" cy="208.5" r="5"/><path d="M1636.5 203.5 v-2 M1635 201.5 h3"/></g><line x1="1757" y1="216.5" x2="1796" y2="216.5" stroke="#4a4a4a"/><line x1="1807.5" y1="216.5" x2="1846.5" y2="216.5" stroke="#4a4a4a"/><g fill="none" stroke="#c0c0c0" stroke-width="1.1"><circle cx="1636.5" cy="228.5" r="5"/><path d="M1636.5 223.5 v-2 M1635 221.5 h3"/></g><path d="M1739 225.5 h-1.5 a2.5 2.5 0 0 0 0 5 h3 a2.5 2.5 0 0 0 2.2 -1.5 M1744 230.5 h1.5 a2.5 2.5 0 0 0 0 -5 h-3 a2.5 2.5 0 0 0 -2.2 1.5" fill="none" stroke="#3c8fe8" stroke-width="1.5"/><line x1="1757" y1="236.5" x2="1796" y2="236.5" stroke="#4a4a4a"/><line x1="1807.5" y1="236.5" x2="1846.5" y2="236.5" stroke="#4a4a4a"/><g fill="none" stroke="#c0c0c0" stroke-width="1.1"><circle cx="1636.5" cy="248.5" r="5"/><path d="M1636.5 243.5 v-2 M1635 241.5 h3"/></g><line x1="1757" y1="256.5" x2="1796" y2="256.5" stroke="#4a4a4a"/><g fill="none" stroke="#c0c0c0" stroke-width="1.1"><circle cx="1636.5" cy="268.5" r="5"/><path d="M1636.5 263.5 v-2 M1635 261.5 h3"/></g><line x1="1757" y1="276.5" x2="1796" y2="276.5" stroke="#4a4a4a"/><g fill="none" stroke="#c0c0c0" stroke-width="1.1"><circle cx="1636.5" cy="519.5" r="5"/><path d="M1636.5 514.5 v-2 M1635 512.5 h3"/></g><path d="M1739 516.5 h-1.5 a2.5 2.5 0 0 0 0 5 h3 a2.5 2.5 0 0 0 2.2 -1.5 M1744 521.5 h1.5 a2.5 2.5 0 0 0 0 -5 h-3 a2.5 2.5 0 0 0 -2.2 1.5" fill="none" stroke="#3c8fe8" stroke-width="1.5"/><line x1="1757" y1="527.5" x2="1796" y2="527.5" stroke="#4a4a4a"/><line x1="1807.5" y1="527.5" x2="1846.5" y2="527.5" stroke="#4a4a4a"/><g fill="none" stroke="#c0c0c0" stroke-width="1.1"><circle cx="1636.5" cy="539.5" r="5"/><path d="M1636.5 534.5 v-2 M1635 532.5 h3"/></g><line x1="1757" y1="547.5" x2="1796" y2="547.5" stroke="#4a4a4a"/><g fill="none" stroke="#c0c0c0" stroke-width="1.1"><circle cx="1636.5" cy="560.5" r="5"/><path d="M1636.5 555.5 v-2 M1635 553.5 h3"/></g><g fill="none" stroke="#c0c0c0" stroke-width="1.1"><circle cx="1636.5" cy="580.5" r="5"/><path d="M1636.5 575.5 v-2 M1635 573.5 h3"/></g><line x1="1757" y1="588.5" x2="1796" y2="588.5" stroke="#4a4a4a"/><g fill="none" stroke="#c0c0c0" stroke-width="1.1"><circle cx="1636.5" cy="642.5" r="5"/><path d="M1636.5 637.5 v-2 M1635 635.5 h3"/></g><g fill="none" stroke="#c0c0c0" stroke-width="1.1"><circle cx="1636.5" cy="700.5" r="5"/><path d="M1636.5 695.5 v-2 M1635 693.5 h3"/></g><line x1="1757" y1="708.5" x2="1796" y2="708.5" stroke="#4a4a4a"/><line x1="1807.5" y1="708.5" x2="1846.5" y2="708.5" stroke="#4a4a4a"/><g fill="none" stroke="#c0c0c0" stroke-width="1.1"><circle cx="1636.5" cy="720.5" r="5"/><path d="M1636.5 715.5 v-2 M1635 713.5 h3"/></g><line x1="1757" y1="728.5" x2="1796" y2="728.5" stroke="#4a4a4a"/><line x1="1807.5" y1="728.5" x2="1846.5" y2="728.5" stroke="#4a4a4a"/><g fill="none" stroke="#c0c0c0" stroke-width="1.1"><circle cx="1636.5" cy="740.5" r="5"/><path d="M1636.5 735.5 v-2 M1635 733.5 h3"/></g><path d="M1739 737.5 h-1.5 a2.5 2.5 0 0 0 0 5 h3 a2.5 2.5 0 0 0 2.2 -1.5 M1744 742.5 h1.5 a2.5 2.5 0 0 0 0 -5 h-3 a2.5 2.5 0 0 0 -2.2 1.5" fill="none" stroke="#3c8fe8" stroke-width="1.5"/><line x1="1757" y1="748.5" x2="1796" y2="748.5" stroke="#4a4a4a"/><line x1="1807.5" y1="748.5" x2="1846.5" y2="748.5" stroke="#4a4a4a"/><g fill="none" stroke="#c0c0c0" stroke-width="1.1"><circle cx="1636.5" cy="760.5" r="5"/><path d="M1636.5 755.5 v-2 M1635 753.5 h3"/></g><line x1="1757" y1="768.5" x2="1796" y2="768.5" stroke="#4a4a4a"/><g fill="none" stroke="#c0c0c0" stroke-width="1.1"><circle cx="1636.5" cy="780.5" r="5"/><path d="M1636.5 775.5 v-2 M1635 773.5 h3"/></g><line x1="1757" y1="788.5" x2="1796" y2="788.5" stroke="#4a4a4a"/><g fill="none" stroke="#c0c0c0" stroke-width="1.1"><circle cx="1636.5" cy="800.5" r="5"/><path d="M1636.5 795.5 v-2 M1635 793.5 h3"/></g><line x1="1757" y1="808.5" x2="1796" y2="808.5" stroke="#4a4a4a"/><g fill="none" stroke="#c0c0c0" stroke-width="1.1"><circle cx="1636.5" cy="820.5" r="5"/><path d="M1636.5 815.5 v-2 M1635 813.5 h3"/></g><line x1="1757" y1="828.5" x2="1796" y2="828.5" stroke="#4a4a4a"/>
<rect x="1618" y="283" width="276" height="2" fill="#121212"/>
<rect x="1619" y="316" width="277" height="149" rx="2" fill="#1e1e1e"/>
<rect x="1643" y="318" width="251" height="17" fill="#4a4a4a" stroke="#b8b8b8" stroke-width="2"/>
<rect x="1642" y="338" width="253" height="18" fill="#4a4a4a"/>
<path d="M1624 326.5 c3 -4.5 9 -4.5 12 0 c-3 4.5 -9 4.5 -12 0z" fill="#c8c8c8"/><circle cx="1630" cy="326.5" r="1.7" fill="#1e1e1e"/>
<path d="M1624 346.5 c3 -4.5 9 -4.5 12 0 c-3 4.5 -9 4.5 -12 0z" fill="#c8c8c8"/><circle cx="1630" cy="346.5" r="1.7" fill="#1e1e1e"/>
<path d="M1653.5 321 L1655 325 L1659 325.2 L1656 327.8 L1657 331.8 L1653.5 329.5 L1650 331.8 L1651 327.8 L1648 325.2 L1652 325 Z" fill="#b8b8b8"/>
<path d="M1677.5 341 L1679 345 L1683 345.2 L1680 347.8 L1681 351.8 L1677.5 349.5 L1674 351.8 L1675 347.8 L1672 345.2 L1676 345 Z" fill="#b8b8b8"/>
<rect x="1618" y="477" width="276" height="2" fill="#121212"/>
<rect x="1757" y="552" width="16" height="16" fill="#fff"/>
<path d="M1789.5 556.5 L1793 553" stroke="#b8b8b8" stroke-width="3.6" stroke-linecap="round"/><path d="M1786.8 555.8 L1791.2 560.2" stroke="#b8b8b8" stroke-width="1.6"/><path d="M1787.7 558.1 L1780.9 564.9 Q1780.3 567.7 1783.1 567.1 L1789.9 560.3" fill="none" stroke="#b8b8b8" stroke-width="1"/><rect x="1801.5" y="550.5" width="90" height="18" rx="2" fill="#1c1c1c" stroke="#2e2e2e"/><path d="M1879 557.5 l3.5 3.5 3.5 -3.5" fill="none" stroke="#b0b0b0" stroke-width="1"/>
<rect x="1757.5" y="590.5" width="85" height="19" rx="2" fill="#1e1e1e" stroke="#2c2c2c"/>
<rect x="1758" y="591" width="27" height="18" fill="#141414"/>
<line x1="1785.5" y1="591" x2="1785.5" y2="609" stroke="#2c2c2c"/><line x1="1814.5" y1="591" x2="1814.5" y2="609" stroke="#2c2c2c"/>
<path d="M1776 596 h-5.5 a4.3 4.3 0 0 0 0 8.6 h5.5" fill="none" stroke="#3c8fe8" stroke-width="1.4"/><rect x="1771.5" y="595.3" width="4.5" height="3.2" fill="#3c8fe8"/><rect x="1771.5" y="602" width="4.5" height="3.2" fill="#3c8fe8"/>
<path d="M1805 597 h-4.3 a3.3 3.3 0 0 0 0 6.6 h4.3" fill="none" stroke="#c0c0c0" stroke-width="3.3"/>
<path d="M1834 597 h-8.3 v6.6 h8.3" fill="none" stroke="#c0c0c0" stroke-width="3.3"/>
<rect x="1757.5" y="611.5" width="85" height="19" rx="2" fill="#1e1e1e" stroke="#2c2c2c"/>
<rect x="1758" y="612" width="27" height="18" fill="#141414"/>
<line x1="1785.5" y1="612" x2="1785.5" y2="630" stroke="#2c2c2c"/><line x1="1814.5" y1="612" x2="1814.5" y2="630" stroke="#2c2c2c"/>
<path d="M1766 617 h4 v5.5 h6 v4 h-10z" fill="#3c8fe8"/>
<path d="M1797 617 v5 a2.5 2.5 0 0 0 2.5 2.5 h5.5" fill="none" stroke="#c0c0c0" stroke-width="3.5"/>
<path d="M1826 617 v5 l2.5 2.5 h5.5" fill="none" stroke="#c0c0c0" stroke-width="3.5"/>
<rect x="1757.75" y="634.75" width="15.5" height="15.5" fill="#232f38" stroke="#e8e8e8" stroke-width="1.5"/>
<path d="M1789.5 638.5 L1793 635" stroke="#b8b8b8" stroke-width="3.6" stroke-linecap="round"/><path d="M1786.8 637.8 L1791.2 642.2" stroke="#b8b8b8" stroke-width="1.6"/><path d="M1787.7 640.1 L1780.9 646.9 Q1780.3 649.7 1783.1 649.1 L1789.9 642.3" fill="none" stroke="#b8b8b8" stroke-width="1"/><rect x="1801.5" y="632.5" width="90" height="18" rx="2" fill="#1c1c1c" stroke="#2e2e2e"/><path d="M1879 639.5 l3.5 3.5 3.5 -3.5" fill="none" stroke="#b0b0b0" stroke-width="1"/>
<rect x="1618" y="657" width="276" height="2" fill="#121212"/>
<g fill="#121212"><rect x="1608" y="845" width="298" height="2"/><rect x="1608" y="874" width="298" height="2"/><rect x="1608" y="904" width="298" height="2"/><rect x="1608" y="934" width="298" height="2"/></g>
</svg>
<div class="t" style="left:1620px;top:79px;color:#c8c8c8">Preview</div>
<div class="t" style="left:1620px;top:139px;color:#c8c8c8">Properties: Shape Layer 1</div>
<div class="t" style="left:1619px;top:163px;color:#a8a8a8;font-weight:bold;font-size:10.5px">Layer Transform</div>
<div class="t" style="left:1760px;top:163px;color:#3c8fe8">Reset</div>
<div class="t" style="left:1619px;top:295px;color:#a8a8a8;font-weight:bold;font-size:10.5px">Layer Contents</div>
<div class="t" style="left:1667px;top:322px;color:#a0a0a0">Shape Layer 1</div>
<div class="t" style="left:1691px;top:342px;color:#a0a0a0">Rectangle 1</div>
<div class="t" style="left:1619px;top:489px;color:#a8a8a8;font-weight:bold;font-size:10.5px">Shape Properties</div>
<div class="t" style="left:1760px;top:489px;color:#3c8fe8">Reset</div>
<div class="t" style="left:1809px;top:555px;color:#c0c0c0">Solid Color</div>
<div class="t" style="left:1809px;top:637px;color:#c0c0c0">Solid Color</div>
<div class="t" style="left:1619px;top:669px;color:#a8a8a8;font-weight:bold;font-size:10.5px">Shape Transform</div>
<div class="t" style="left:1760px;top:669px;color:#3c8fe8">Reset</div>
<div class="t" style="left:1620px;top:856px;color:#a8a8a8">Align</div>
<div class="t" style="left:1620px;top:886px;color:#a8a8a8">Audio</div>
<div class="t" style="left:1620px;top:916px;color:#a8a8a8">Effects &amp; Presets</div>
<div class="t" style="left:1667px;top:183px">Anchor Point</div><div class="t" style="left:1759px;top:183px;color:#3c8fe8">0</div><div class="t" style="left:1809px;top:183px;color:#3c8fe8">0</div><div class="t" style="left:1667px;top:203px">Position</div><div class="t" style="left:1759px;top:203px;color:#3c8fe8">960</div><div class="t" style="left:1809px;top:203px;color:#3c8fe8">540</div><div class="t" style="left:1667px;top:223px">Scale</div><div class="t" style="left:1759px;top:223px;color:#3c8fe8">100<span style="color:#a8a8a8;font-size:10px"> %</span></div><div class="t" style="left:1809px;top:223px;color:#3c8fe8">100<span style="color:#a8a8a8;font-size:10px"> %</span></div><div class="t" style="left:1667px;top:243px">Rotation</div><div class="t" style="left:1759px;top:243px;color:#3c8fe8">0<span style="color:#a8a8a8;font-size:10px"> x</span>+0<span style="color:#a8a8a8;font-size:9px;position:relative;top:-2px"> &#176;</span></div><div class="t" style="left:1667px;top:263px">Opacity</div><div class="t" style="left:1759px;top:263px;color:#3c8fe8">100<span style="color:#a8a8a8;font-size:10px"> %</span></div><div class="t" style="left:1667px;top:514px">Size</div><div class="t" style="left:1759px;top:514px;color:#3c8fe8">1014</div><div class="t" style="left:1809px;top:514px;color:#3c8fe8">518</div><div class="t" style="left:1667px;top:534px">Roundness</div><div class="t" style="left:1759px;top:534px;color:#3c8fe8">20</div><div class="t" style="left:1667px;top:555px">Stroke Color</div><div class="t" style="left:1667px;top:575px">Stroke Width</div><div class="t" style="left:1759px;top:575px;color:#3c8fe8">2</div><div class="t" style="left:1667px;top:595px">Line Cap</div><div class="t" style="left:1667px;top:616px">Line Join</div><div class="t" style="left:1667px;top:637px">Fill Color</div><div class="t" style="left:1667px;top:695px">Anchor Point</div><div class="t" style="left:1759px;top:695px;color:#3c8fe8">0</div><div class="t" style="left:1809px;top:695px;color:#3c8fe8">0</div><div class="t" style="left:1667px;top:715px">Position</div><div class="t" style="left:1759px;top:715px;color:#3c8fe8">115</div><div class="t" style="left:1809px;top:715px;color:#3c8fe8">33</div><div class="t" style="left:1667px;top:735px">Scale</div><div class="t" style="left:1759px;top:735px;color:#3c8fe8">100<span style="color:#a8a8a8;font-size:10px"> %</span></div><div class="t" style="left:1809px;top:735px;color:#3c8fe8">100<span style="color:#a8a8a8;font-size:10px"> %</span></div><div class="t" style="left:1667px;top:755px">Skew</div><div class="t" style="left:1759px;top:755px;color:#3c8fe8">0</div><div class="t" style="left:1667px;top:775px">Skew Axis</div><div class="t" style="left:1759px;top:775px;color:#3c8fe8">0<span style="color:#a8a8a8;font-size:10px"> x</span>+0<span style="color:#a8a8a8;font-size:9px;position:relative;top:-2px"> &#176;</span></div><div class="t" style="left:1667px;top:795px">Rotation</div><div class="t" style="left:1759px;top:795px;color:#3c8fe8">0<span style="color:#a8a8a8;font-size:10px"> x</span>+0<span style="color:#a8a8a8;font-size:9px;position:relative;top:-2px"> &#176;</span></div><div class="t" style="left:1667px;top:815px">Opacity</div><div class="t" style="left:1759px;top:815px;color:#3c8fe8">100<span style="color:#a8a8a8;font-size:10px"> %</span></div>
</body></html>
